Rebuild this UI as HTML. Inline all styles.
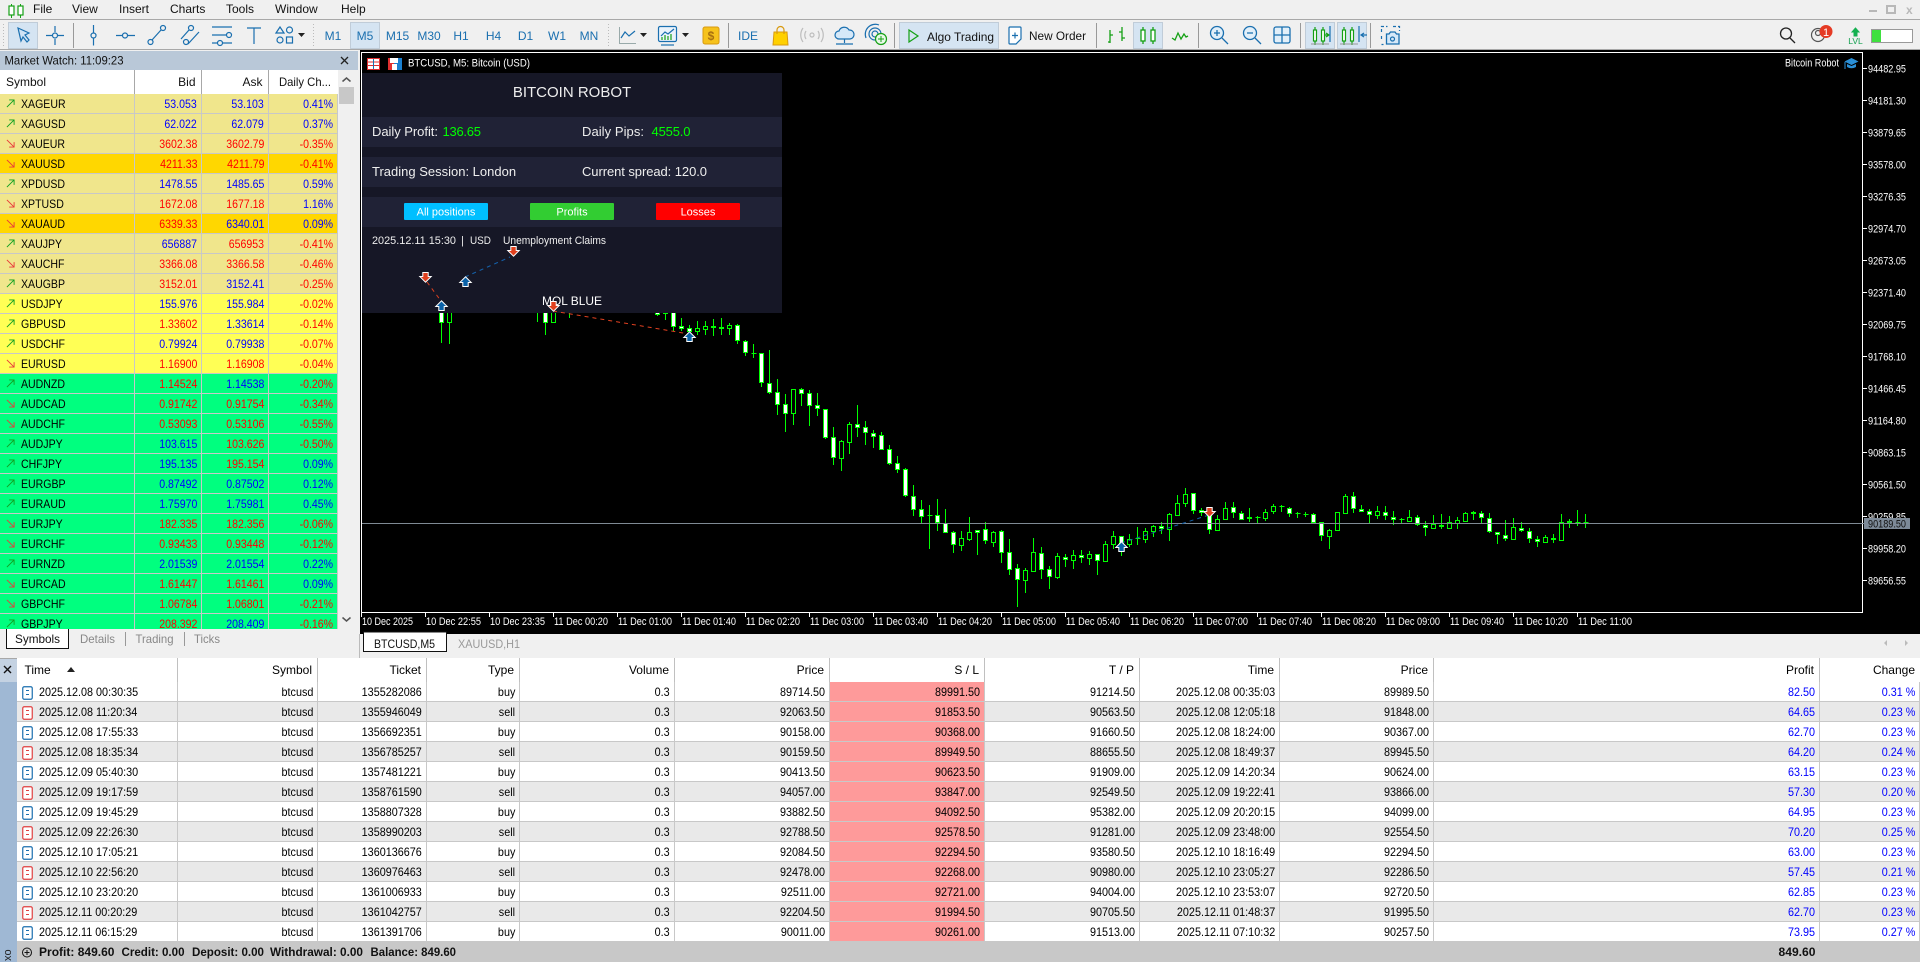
<!DOCTYPE html>
<html><head><meta charset="utf-8"><title>MetaTrader</title>
<style>
html,body{margin:0;padding:0;width:1920px;height:962px;overflow:hidden;background:#f0f0f0;font-family:"Liberation Sans",sans-serif;font-size:12px;color:#000}
svg.m{position:absolute;left:0;top:0}
svg.m text{font-family:"Liberation Sans",sans-serif}
table{border-collapse:separate;border-spacing:0;table-layout:fixed;position:absolute}
td,th{height:20px;box-sizing:border-box;padding:0 4px 0 0;text-align:right;white-space:nowrap;border-right:1px solid #c8c8c8;border-bottom:1px solid #c8c8c8;font-weight:normal;overflow:hidden;line-height:18px}
i{font-style:normal;display:inline-block;transform-origin:100% 50%}
#w{position:absolute;left:0;top:94px;width:338px;height:535px;overflow:hidden;background:#00ff7f}
#w table{left:0;top:0;width:338px}
#w i{transform:scaleX(.88)}
#w .s{text-align:left;padding-left:21px;position:relative}
#w .s i{transform-origin:0 50%}
#w .s svg{position:absolute;left:6px;top:5px}
.k td{background:#f0e68c}.g td{background:#ffd700}.y td{background:#ffff55}.v td{background:#00ff7f}
.b{color:#00f}.r{color:#f00}
#t{left:17px;top:658px;width:1903px;background:#fff}
#t th{height:24px;border-bottom:0;border-right:1px solid #c0c0c0;background:#fff;padding-right:5px}
#t i{transform:scaleX(.9)}
#t .l{text-align:left;padding-left:22px;position:relative}
#t .l i{transform-origin:0 50%}
#t .l svg{position:absolute;left:5px;top:4px}
#t tr.e td{background:#e9e9e9}
#t td.p,#t tr.e td.p{background:#fe9a9a}
#t td.c{color:#00f}
</style></head><body>
<svg class="m" width="1920" height="962" viewBox="0 0 1920 962" font-size="12">
<defs>
<symbol id="u" viewBox="0 0 10 10"><path d="M1 9L9 1M3.500 1H9V6.500" fill="none" stroke="#12a020" stroke-width="1"/></symbol>
<symbol id="d" viewBox="0 0 10 10"><path d="M1 1L9 9M3.500 9H9V3.500" fill="none" stroke="#e8383a" stroke-width="1"/></symbol>
<symbol id="tb" viewBox="0 0 11 14"><rect x=".75" y=".75" width="9.5" height="12.5" rx="1.5" fill="#fff" stroke="#1a6faf" stroke-width="1.2"/><path d="M4 4.5h3M4 8.5h3" stroke="#1a6faf"/></symbol>
<symbol id="ts" viewBox="0 0 11 14"><rect x=".75" y=".75" width="9.5" height="12.5" rx="1.5" fill="#fff" stroke="#e04040" stroke-width="1.2"/><path d="M4 4.5h3M4 8.5h3" stroke="#e04040"/></symbol>
<g id="au"><path d="M0 -4.500L4.500 0H2.200V4H-2.200V0H-4.500Z" fill="#0b62a8" stroke="#fff" stroke-width="2" paint-order="stroke"/></g>
<g id="ad"><path d="M0 4.500L4.500 0H2.200V-4H-2.200V0H-4.500Z" fill="#e0401e" stroke="#fff" stroke-width="2" paint-order="stroke"/></g>
</defs>
<rect width="1920" height="962" fill="#f0f0f0"/>
<!-- menu -->
<path d="M11.500 4v14M20.500 4v14" stroke="#14a014"/><rect x="9" y="6" width="5" height="9" fill="#fff" stroke="#14a014" stroke-width="1.200"/><rect x="18" y="6" width="5" height="9" fill="#fff" stroke="#14a014" stroke-width="1.200"/>
<g fill="#111"><text x="33" y="13">File</text><text x="72" y="13">View</text><text x="119" y="13">Insert</text><text x="170" y="13">Charts</text><text x="226" y="13">Tools</text><text x="275" y="13">Window</text><text x="341" y="13">Help</text></g>
<rect x="0" y="19" width="1920" height="1" fill="#a8a8a8"/>
<g fill="#b8b8b8"><rect x="1869" y="10" width="8" height="2"/><rect x="1887" y="6" width="8" height="7" fill="none" stroke="#b8b8b8" stroke-width="2"/><text x="1906" y="14" font-size="12" font-weight="bold">x</text></g>
<!-- grips -->
<path d="M3.500 24v22M313.500 24v22M608.500 24v22" stroke="#bbb" stroke-dasharray="1 2"/>
<!-- pressed -->
<g fill="#d5e4f2" stroke="#c0ccd8"><rect x="8.500" y="22.500" width="29" height="26"/><rect x="350.500" y="22.500" width="29" height="26"/><rect x="899.500" y="22.500" width="99" height="26"/><rect x="1133.500" y="22.500" width="29" height="26"/><rect x="1305.500" y="22.500" width="29" height="26"/><rect x="1337.500" y="22.500" width="29" height="26"/></g>
<!-- seps -->
<path d="M73.500 23v25M728.500 23v25M894.500 23v25M1096.500 23v25M1198.500 23v25M1300.500 23v25M1370.500 23v25" stroke="#999"/>
<!-- drawing tools -->
<g fill="none" stroke="#1a6faf" stroke-width="1.200">
<path d="M18 28l11 5-4 2 4 5-2 2-4-5-2 4z" fill="#cfe3f5"/>
<path d="M46 35.500h6M58 35.500h6M55 26v6M55 39v6"/><circle cx="55" cy="35.500" r="2.500"/>
<path d="M93.500 25v7.500M93.500 38.500v7"/><circle cx="93.500" cy="35.500" r="2.500"/>
<path d="M116 35.500h6.500M128 35.500h7"/><circle cx="125" cy="35.500" r="2.500"/>
<path d="M152 40l9-10"/><circle cx="150.500" cy="42" r="2.500"/><circle cx="163" cy="28" r="2.500"/>
<path d="M181 39l8-9M188 44l11-12"/><circle cx="191" cy="28" r="2.500"/><circle cx="186" cy="42" r="2.500"/>
<path d="M212 27h20M212 35h14M212 43h6M222 43h10"/><circle cx="229" cy="35" r="2.500"/><circle cx="220" cy="43" r="2.500"/>
<path d="M247 28h14M254 28v16"/>
<path d="M276 33l4-6 4 6z"/><circle cx="289.500" cy="30" r="3"/><circle cx="280" cy="40" r="3"/><rect x="286.500" y="37" width="6" height="6"/>
</g>
<path d="M298 33h7l-3.500 4z" fill="#222"/>
<g fill="#1a6faf" text-anchor="middle"><text x="333" y="40">M1</text><text x="365" y="40">M5</text><text x="397.500" y="40">M15</text><text x="429" y="40">M30</text><text x="461" y="40">H1</text><text x="493.500" y="40">H4</text><text x="525.500" y="40">D1</text><text x="557" y="40">W1</text><text x="589" y="40">MN</text></g>
<!-- chart-type -->
<path d="M619.500 27v16.500H636" fill="none" stroke="#9aa"/><path d="M621 38l4-6 4 4 6-5" fill="none" stroke="#1a6faf" stroke-width="1.200"/>
<path d="M640 33h7l-3.500 4z" fill="#222"/>
<g fill="none" stroke="#1a6faf" stroke-width="1.200"><rect x="658.500" y="26.500" width="18" height="15" rx="1.500" fill="#eaf3fb"/><path d="M661 45h13"/><path d="M661 36l4-4 3 2 6-5"/></g><path d="M662 37v3M665 35v5M668 36v4M671 34v6" stroke="#14a014" stroke-width="1.200"/>
<path d="M682 33h7l-3.500 4z" fill="#222"/>
<rect x="703" y="27" width="16" height="17" rx="2" fill="#f6c21c" stroke="#d89a10"/><text x="711" y="40" text-anchor="middle" font-size="12" font-weight="bold" fill="#a87010">$</text>
<text x="748" y="40" text-anchor="middle" fill="#1a6faf">IDE</text>
<path d="M774 32h13l1 13h-15z" fill="#ffd000" stroke="#d89a10"/><path d="M777 34v-4a3.500 3.500 0 0 1 7 0v4" fill="none" stroke="#d89a10" stroke-width="1.200"/>
<g fill="none" stroke="#bdbdbd" stroke-width="1.200"><circle cx="812" cy="35" r="2"/><path d="M806 31a7 7 0 0 0 0 8M818 31a7 7 0 0 1 0 8M803 28a12 12 0 0 0 0 14M821 28a12 12 0 0 1 0 14"/></g>
<g fill="none" stroke="#1a6faf" stroke-width="1.200"><path d="M839 39a4 4 0 0 1 0-8 5.500 5.500 0 0 1 10-1 4.500 4.500 0 0 1 1 9z" fill="#d5e8f8"/><path d="M844.500 39v4M836 44h17"/>
<circle cx="875" cy="34" r="3"/><circle cx="875" cy="34" r="6"/><path d="M866 38a10 10 0 0 1 13-13"/></g>
<circle cx="881" cy="39" r="5.500" fill="#e8f8e8" stroke="#14a014" stroke-width="1.200"/><path d="M878 39h6M881 36v6" stroke="#14a014"/>
<path d="M909 30l9 6-9 6z" fill="none" stroke="#14a014" stroke-width="1.200"/>
<text x="927" y="41" font-size="12" fill="#111" textLength="67" lengthAdjust="spacingAndGlyphs">Algo Trading</text>
<g fill="none" stroke="#1a6faf" stroke-width="1.200"><path d="M1010 27h10a1 1 0 0 1 1 1v11l-5 5h-6a1 1 0 0 1-1-1V28a1 1 0 0 1 1-1z" fill="#fff"/><path d="M1012 35.500h6M1015 32.500v6"/></g>
<text x="1029" y="40" fill="#111" textLength="57" lengthAdjust="spacingAndGlyphs">New Order</text>
<g fill="none" stroke="#14a014" stroke-width="1.300"><path d="M1110 30v13M1110 42h-2M1110 35h3M1122 27v14M1122 32h-3M1122 38h3"/>
<path d="M1143 27v17M1153 27v17"/><rect x="1141" y="30" width="4" height="11" fill="#fff"/><rect x="1151" y="30" width="4" height="11" fill="#fff"/>
<path d="M1172 38l3 2 3-7 3 6 3-5 2 3 2-1"/></g>
<g fill="none" stroke="#1a6faf" stroke-width="1.300"><circle cx="1217" cy="33" r="6.500" fill="#e2eff9"/><path d="M1222 38l6 6M1214 33h6M1217 30v6"/><circle cx="1250" cy="33" r="6.500" fill="#e2eff9"/><path d="M1255 38l6 6M1247 33h6"/>
<rect x="1274" y="27" width="16" height="16" rx="2" fill="#e2eff9"/><path d="M1282 27v16M1274 35h16"/></g>
<g fill="none" stroke="#14a014" stroke-width="1.200"><path d="M1315 27v18M1323 27v18"/><rect x="1313.500" y="30" width="3" height="11" fill="#fff"/><rect x="1321.500" y="30" width="3" height="11" fill="#fff"/><path d="M1325 35h3M1326 33l3 2-3 2" /><path d="M1344 27v18M1352 27v18"/><rect x="1342.500" y="30" width="3" height="11" fill="#fff"/><rect x="1350.500" y="30" width="3" height="11" fill="#fff"/></g>
<path d="M1330 26v16M1359 26v16M1361 35h6M1364 33l-3 2 3 2" fill="none" stroke="#1a6faf" stroke-width="1.200"/>
<path d="M1311 44h18M1340 44h18" stroke="#999"/>
<g fill="none" stroke="#1a6faf" stroke-width="1.200"><path d="M1381.500 32v-5.500h6M1393 26.500h6.500V31M1381.500 36v5M1381.500 44.500h2" stroke-dasharray="3 2"/><path d="M1386.500 34h2.500l1.500-2h4.500l1.500 2h2.500v10h-12.500z" fill="#d5e8f8" stroke-width="1.300"/><circle cx="1392.500" cy="39" r="2"/></g>
<g fill="none" stroke="#222" stroke-width="1.300"><circle cx="1786" cy="33.500" r="5.500"/><path d="M1790 38l5 5"/></g>
<g fill="none" stroke="#555" stroke-width="1.200"><circle cx="1818" cy="35" r="6.500"/><circle cx="1818" cy="33" r="2.500"/></g>
<circle cx="1826" cy="31.500" r="6.500" fill="#e53a24"/><text x="1826" y="36" text-anchor="middle" font-size="11" fill="#fff">1</text>
<path d="M1855.500 28l-3.500 4h2v4h3v-4h2z" fill="#14b050" stroke="#14b050"/><text x="1855.500" y="44" text-anchor="middle" font-size="8.500" fill="#14a050">LVL</text>
<rect x="1871.500" y="29.500" width="41" height="13" fill="#fff" stroke="#999"/><rect x="1872" y="30" width="9" height="12" fill="#3fe03f"/>
<rect x="0" y="49" width="1920" height="1" fill="#a8a8a8"/>
<!-- market watch head -->
<rect x="0" y="51" width="358" height="19" fill="#b9c8d8"/>
<text x="4.500" y="64.500" fill="#111" textLength="119" lengthAdjust="spacingAndGlyphs">Market Watch: 11:09:23</text>
<path d="M341 57l7 7M348 57l-7 7" stroke="#222" stroke-width="1.300"/>
<rect x="0" y="70" width="338" height="24" fill="#fff"/>
<path d="M134.500 70v24M201.500 70v24M268.500 70v24" stroke="#a8a8a8"/>
<g fill="#111"><text x="6" y="86">Symbol</text><text x="195.500" y="86" text-anchor="end">Bid</text><text x="262.500" y="86" text-anchor="end">Ask</text><text x="331" y="86" text-anchor="end" textLength="52" lengthAdjust="spacingAndGlyphs">Daily Ch...</text></g>
<rect x="339" y="87" width="15" height="17" fill="#c8c8c8"/>
<path d="M342.500 81.500l4-3.500 4 3.500M342.500 617.500l4 3.500 4-3.500" fill="none" stroke="#555" stroke-width="1.500"/>
<!-- MW tabs -->
<rect x="6.500" y="628" width="62" height="20.500" fill="#fff" stroke="#111"/>
<text x="15" y="643" fill="#111" textLength="45" lengthAdjust="spacingAndGlyphs">Symbols</text>
<g fill="#888"><text x="80" y="643" textLength="35" lengthAdjust="spacingAndGlyphs">Details</text><text x="135.500" y="643" textLength="38" lengthAdjust="spacingAndGlyphs">Trading</text><text x="194" y="643" textLength="26" lengthAdjust="spacingAndGlyphs">Ticks</text></g>
<path d="M125.500 632v14M184.500 632v14" stroke="#999"/>
<!-- chart -->
<rect x="360" y="50" width="1560" height="584" fill="#000"/>
<path d="M362 52.500H1862.500V612.500H362M361.500 52V613" fill="none" stroke="#fff"/>
<g stroke="#fff"><path d="M361.500 612v5M425.500 612v5M489.500 612v5M553.500 612v5M617.500 612v5M681.500 612v5M745.500 612v5M809.500 612v5M873.500 612v5M937.500 612v5M1001.500 612v5M1065.500 612v5M1129.500 612v5M1193.500 612v5M1257.500 612v5M1321.500 612v5M1385.500 612v5M1449.500 612v5M1513.500 612v5M1577.500 612v5"/>
<path d="M1863 68.500h4M1863 100.500h4M1863 132.500h4M1863 164.500h4M1863 196.500h4M1863 228.500h4M1863 260.500h4M1863 292.500h4M1863 324.500h4M1863 356.500h4M1863 388.500h4M1863 420.500h4M1863 452.500h4M1863 484.500h4M1863 516.500h4M1863 548.500h4M1863 580.500h4"/></g>
<g fill="#fff" font-size="11">
<text x="362" y="625" textLength="51" lengthAdjust="spacingAndGlyphs">10 Dec 2025</text>
<text x="426" y="625" textLength="55" lengthAdjust="spacingAndGlyphs">10 Dec 22:55</text><text x="490" y="625" textLength="55" lengthAdjust="spacingAndGlyphs">10 Dec 23:35</text><text x="554" y="625" textLength="54" lengthAdjust="spacingAndGlyphs">11 Dec 00:20</text><text x="618" y="625" textLength="54" lengthAdjust="spacingAndGlyphs">11 Dec 01:00</text><text x="682" y="625" textLength="54" lengthAdjust="spacingAndGlyphs">11 Dec 01:40</text><text x="746" y="625" textLength="54" lengthAdjust="spacingAndGlyphs">11 Dec 02:20</text><text x="810" y="625" textLength="54" lengthAdjust="spacingAndGlyphs">11 Dec 03:00</text><text x="874" y="625" textLength="54" lengthAdjust="spacingAndGlyphs">11 Dec 03:40</text><text x="938" y="625" textLength="54" lengthAdjust="spacingAndGlyphs">11 Dec 04:20</text><text x="1002" y="625" textLength="54" lengthAdjust="spacingAndGlyphs">11 Dec 05:00</text><text x="1066" y="625" textLength="54" lengthAdjust="spacingAndGlyphs">11 Dec 05:40</text><text x="1130" y="625" textLength="54" lengthAdjust="spacingAndGlyphs">11 Dec 06:20</text><text x="1194" y="625" textLength="54" lengthAdjust="spacingAndGlyphs">11 Dec 07:00</text><text x="1258" y="625" textLength="54" lengthAdjust="spacingAndGlyphs">11 Dec 07:40</text><text x="1322" y="625" textLength="54" lengthAdjust="spacingAndGlyphs">11 Dec 08:20</text><text x="1386" y="625" textLength="54" lengthAdjust="spacingAndGlyphs">11 Dec 09:00</text><text x="1450" y="625" textLength="54" lengthAdjust="spacingAndGlyphs">11 Dec 09:40</text><text x="1514" y="625" textLength="54" lengthAdjust="spacingAndGlyphs">11 Dec 10:20</text><text x="1578" y="625" textLength="54" lengthAdjust="spacingAndGlyphs">11 Dec 11:00</text>
<text x="1868" y="72.500" textLength="38" lengthAdjust="spacingAndGlyphs">94482.95</text><text x="1868" y="104.500" textLength="38" lengthAdjust="spacingAndGlyphs">94181.30</text><text x="1868" y="136.500" textLength="38" lengthAdjust="spacingAndGlyphs">93879.65</text><text x="1868" y="168.500" textLength="38" lengthAdjust="spacingAndGlyphs">93578.00</text><text x="1868" y="200.500" textLength="38" lengthAdjust="spacingAndGlyphs">93276.35</text><text x="1868" y="232.500" textLength="38" lengthAdjust="spacingAndGlyphs">92974.70</text><text x="1868" y="264.500" textLength="38" lengthAdjust="spacingAndGlyphs">92673.05</text><text x="1868" y="296.500" textLength="38" lengthAdjust="spacingAndGlyphs">92371.40</text><text x="1868" y="328.500" textLength="38" lengthAdjust="spacingAndGlyphs">92069.75</text><text x="1868" y="360.500" textLength="38" lengthAdjust="spacingAndGlyphs">91768.10</text><text x="1868" y="392.500" textLength="38" lengthAdjust="spacingAndGlyphs">91466.45</text><text x="1868" y="424.500" textLength="38" lengthAdjust="spacingAndGlyphs">91164.80</text><text x="1868" y="456.500" textLength="38" lengthAdjust="spacingAndGlyphs">90863.15</text><text x="1868" y="488.500" textLength="38" lengthAdjust="spacingAndGlyphs">90561.50</text><text x="1868" y="520.500" textLength="38" lengthAdjust="spacingAndGlyphs">90259.85</text><text x="1868" y="552.500" textLength="38" lengthAdjust="spacingAndGlyphs">89958.20</text><text x="1868" y="584.500" textLength="38" lengthAdjust="spacingAndGlyphs">89656.55</text>
</g>
<!-- candles -->
<path stroke="#0f0" fill="none" d="M441.500 312V343M449.500 312V344M537.500 312V322M545.500 312V335M569.500 312V318M657.500 312V316M665.500 312V320M673.500 312V331M681.500 318V331M689.500 325V333M697.500 321V335M705.500 321V335M713.500 319V336M721.500 318V335M729.500 323V335M737.500 324V344M745.500 340V356M753.500 344V358M761.500 353V387M769.500 350V394M777.500 379V415M785.500 394V432M793.500 414V425M801.500 388V406M809.500 390V426M817.500 393V416M825.500 409V439M833.500 427V465M841.500 440V471M849.500 422V454M857.500 405V437M865.500 421V445M873.500 430V448M881.500 432V450M889.500 445V465M897.500 456V473M905.500 468V497M913.500 485V516M921.500 500V523M929.500 505V549M937.500 499V531M945.500 509V533M953.500 531V553M961.500 531V551M969.500 517V541M977.500 530V555M985.500 522V544M993.500 531V547M1001.500 530V563M1009.500 539V575M1017.500 564V607M1025.500 568V593M1033.500 538V571M1041.500 547V579M1049.500 566V589M1057.500 553V579M1065.500 554V567M1073.500 550V569M1081.500 550V563M1089.500 551V565M1097.500 554V575M1105.500 541V562M1113.500 531V549M1121.500 536V556M1129.500 534V547M1137.500 527V545M1145.500 528V543M1153.500 525V537M1161.500 522V534M1169.500 513V541M1177.500 495V515M1185.500 488V507M1193.500 493V514M1201.500 508V516M1209.500 512V534M1217.500 515V531M1225.500 502V519M1233.500 502V518M1241.500 511V520M1249.500 508V522M1257.500 516V523M1265.500 509V521M1273.500 504V514M1281.500 505V512M1289.500 507V517M1297.500 512V518M1305.500 512V517M1313.500 513V523M1321.500 522V541M1329.500 529V549M1345.500 494V513M1353.500 492V513M1361.500 505V512M1369.500 509V523M1377.500 506V519M1385.500 506V520M1393.500 511V525M1401.500 518V523M1409.500 510V521M1417.500 515V526M1425.500 521V536M1433.500 515V528M1441.500 514V529M1449.500 516V529M1457.500 517V529M1465.500 512V522M1473.500 511V520M1481.500 511V523M1489.500 513V533M1497.500 532V544M1505.500 520V541M1513.500 518V539M1521.500 522V532M1529.500 528V543M1537.500 536V547M1545.500 535V542M1553.500 534V543M1561.500 514V540M1569.500 519V528M1577.500 510V526M1585.500 514V528M751.500 353.500h5M927.500 515.500h5M1255.500 517.500h5M1279.500 506.500h5M1295.500 513.500h5M1303.500 514.500h5M1399.500 519.500h5M1575.500 522.500h5M1583.500 522.500h5M1135.500 538.500h5"/>
<path stroke="#0f0" fill="#fff" d="M439.500 312.500h4v10h-4zM543.500 312.500h4v10h-4zM655.500 312.500h4v2h-4zM663.500 312.500h4v1h-4zM671.500 312.500h4v14h-4zM679.500 326.500h4v2h-4zM687.500 328.500h4v3h-4zM711.500 326.500h4v1h-4zM719.500 327.500h4v1h-4zM735.500 325.500h4v15h-4zM743.500 341.500h4v11h-4zM759.500 353.500h4v29h-4zM767.500 383.500h4v9h-4zM775.500 392.500h4v12h-4zM783.500 404.500h4v9h-4zM799.500 389.500h4v4h-4zM807.500 393.500h4v12h-4zM815.500 405.500h4v3h-4zM823.500 409.500h4v28h-4zM831.500 437.500h4v20h-4zM855.500 424.500h4v3h-4zM863.500 427.500h4v5h-4zM871.500 433.500h4v3h-4zM879.500 435.500h4v14h-4zM887.500 449.500h4v14h-4zM895.500 463.500h4v6h-4zM903.500 469.500h4v26h-4zM911.500 496.500h4v13h-4zM919.500 509.500h4v7h-4zM935.500 515.500h4v7h-4zM943.500 523.500h4v9h-4zM951.500 532.500h4v12h-4zM975.500 530.500h4v2h-4zM983.500 529.500h4v11h-4zM999.500 531.500h4v21h-4zM1007.500 552.500h4v17h-4zM1015.500 568.500h4v11h-4zM1039.500 553.500h4v16h-4zM1047.500 569.500h4v7h-4zM1063.500 557.500h4v2h-4zM1079.500 555.500h4v2h-4zM1095.500 554.500h4v6h-4zM1119.500 536.500h4v7h-4zM1159.500 526.500h4v2h-4zM1191.500 493.500h4v17h-4zM1199.500 510.500h4v2h-4zM1207.500 512.500h4v17h-4zM1231.500 507.500h4v5h-4zM1239.500 513.500h4v6h-4zM1247.500 517.500h4v1h-4zM1287.500 508.500h4v5h-4zM1311.500 514.500h4v8h-4zM1319.500 522.500h4v13h-4zM1351.500 496.500h4v12h-4zM1359.500 509.500h4v2h-4zM1367.500 511.500h4v3h-4zM1383.500 512.500h4v3h-4zM1391.500 517.500h4v2h-4zM1415.500 517.500h4v7h-4zM1423.500 525.500h4v2h-4zM1439.500 525.500h4v1h-4zM1471.500 512.500h4v1h-4zM1479.500 513.500h4v4h-4zM1487.500 518.500h4v13h-4zM1495.500 532.500h4v2h-4zM1503.500 535.500h4v3h-4zM1519.500 528.500h4v2h-4zM1527.500 531.500h4v7h-4zM1535.500 539.500h4v2h-4zM1551.500 538.500h4v1h-4zM1567.500 521.500h4v1h-4z"/>
<path stroke="#0f0" fill="#000" d="M447.500 312.500h4v10h-4zM551.500 312.500h4v10h-4zM695.500 328.500h4v3h-4zM703.500 326.500h4v3h-4zM727.500 325.500h4v3h-4zM791.500 389.500h4v24h-4zM839.500 441.500h4v17h-4zM847.500 424.500h4v18h-4zM959.500 538.500h4v7h-4zM967.500 532.500h4v7h-4zM991.500 532.500h4v10h-4zM1023.500 570.500h4v10h-4zM1031.500 552.500h4v19h-4zM1055.500 556.500h4v21h-4zM1071.500 555.500h4v5h-4zM1087.500 554.500h4v4h-4zM1103.500 544.500h4v17h-4zM1111.500 536.500h4v8h-4zM1127.500 539.500h4v5h-4zM1143.500 531.500h4v8h-4zM1151.500 526.500h4v5h-4zM1167.500 514.500h4v15h-4zM1175.500 503.500h4v12h-4zM1183.500 494.500h4v9h-4zM1215.500 519.500h4v11h-4zM1223.500 508.500h4v11h-4zM1263.500 512.500h4v6h-4zM1271.500 506.500h4v5h-4zM1327.500 530.500h4v6h-4zM1335.500 512.500h4v18h-4zM1343.500 496.500h4v17h-4zM1375.500 511.500h4v4h-4zM1407.500 517.500h4v4h-4zM1431.500 524.500h4v4h-4zM1447.500 522.500h4v6h-4zM1455.500 520.500h4v3h-4zM1463.500 513.500h4v8h-4zM1511.500 527.500h4v12h-4zM1543.500 537.500h4v5h-4zM1559.500 522.500h4v18h-4z"/>
<!-- price line -->
<path d="M362 523.500H1864" stroke="#7f8a94"/>
<rect x="1864" y="518" width="46" height="11" fill="#7d8a98"/>
<text x="1868" y="527.500" font-size="11" fill="#111" textLength="38" lengthAdjust="spacingAndGlyphs">90189.50</text>
<!-- chart title -->
<g><rect x="367.500" y="58.500" width="12" height="11" fill="#fff" stroke="#e03030"/><path d="M368 62h11M368 65.500h11" stroke="#e03030"/><path d="M373.500 59v10" stroke="#1a6faf"/><rect x="388" y="58" width="6" height="12" fill="#e03030"/><rect x="394" y="58" width="8" height="12" fill="#1a80d0"/><rect x="390" y="58" width="8" height="5" fill="#fff"/><rect x="392" y="64" width="5" height="6" fill="#fff"/></g>
<text x="408" y="66.500" font-size="11" fill="#fff" textLength="122" lengthAdjust="spacingAndGlyphs">BTCUSD, M5:  Bitcoin (USD)</text>
<text x="1785" y="66.500" font-size="11" fill="#fff" textLength="54" lengthAdjust="spacingAndGlyphs">Bitcoin Robot</text>
<path d="M1851.500 58l7 3.500-7 3.500-7-3.500z" fill="#2a90d8"/><path d="M1847 64v3q4.500 2.500 9 0v-3l-4.500 2z" fill="#2a90d8"/><path d="M1845 62v7" stroke="#2a90d8"/>
<!-- panel -->
<rect x="362" y="73" width="420" height="240" fill="#161726"/>
<rect x="362" y="117" width="420" height="30" fill="#202236"/><rect x="362" y="157" width="420" height="30" fill="#202236"/><rect x="362" y="197" width="420" height="30" fill="#202236"/>
<g fill="#eee">
<text x="572" y="97" font-size="15" text-anchor="middle">BITCOIN ROBOT</text>
<text x="372" y="136" font-size="13" textLength="66">Daily Profit:</text><text x="442.500" y="136" font-size="13" fill="#0f0" textLength="38.500">136.65</text>
<text x="582" y="136" font-size="13" textLength="62">Daily Pips:</text><text x="651.500" y="136" font-size="13" fill="#0f0" textLength="39">4555.0</text>
<text x="372" y="176" font-size="13">Trading Session: London</text>
<text x="582" y="176" font-size="13" textLength="125">Current spread: 120.0</text>
<text x="372" y="244" font-size="11" textLength="84" lengthAdjust="spacingAndGlyphs">2025.12.11 15:30</text><text x="461" y="244" font-size="11">|</text><text x="470" y="244" font-size="11" textLength="21" lengthAdjust="spacingAndGlyphs">USD</text>
<text x="503" y="244" font-size="11" textLength="103" lengthAdjust="spacingAndGlyphs">Unemployment Claims</text>
<text x="572" y="305" font-size="12" text-anchor="middle" fill="#fff" textLength="60" lengthAdjust="spacingAndGlyphs">MOL BLUE</text>
</g>
<rect x="404" y="203" width="84" height="17" rx="1" fill="#00bfff"/><rect x="530" y="203" width="84" height="17" rx="1" fill="#32cd32"/><rect x="656" y="203" width="84" height="17" rx="1" fill="#f00"/>
<g fill="#fff" font-size="11" text-anchor="middle"><text x="446" y="215.500">All positions</text><text x="572" y="215.500">Profits</text><text x="698" y="215.500">Losses</text></g>
<!-- trades -->
<g fill="none" stroke-dasharray="4 4"><path d="M465 277L510 257" stroke="#1560a8"/><path d="M427 282L441 301" stroke="#d84020"/><path d="M553 311L689 334" stroke="#e04020"/><path d="M1121 543L1209 515" stroke="#1560a8"/></g>
<use href="#ad" x="513.500" y="251"/><use href="#au" x="465.500" y="282"/><use href="#ad" x="425.500" y="277"/><use href="#au" x="441.500" y="306"/><use href="#ad" x="553.500" y="306"/><use href="#au" x="689.500" y="337"/><use href="#au" x="1121.500" y="547"/><use href="#ad" x="1209.500" y="512"/>
<!-- chart tabs -->
<path d="M359.500 634v24" stroke="#bbb"/>
<rect x="363.500" y="632" width="83" height="19.500" fill="#fff" stroke="#111"/>
<text x="374" y="648" fill="#111" textLength="61" lengthAdjust="spacingAndGlyphs">BTCUSD,M5</text>
<text x="458" y="648" fill="#999" textLength="62" lengthAdjust="spacingAndGlyphs">XAUUSD,H1</text>
<path d="M1887 640v6l-3-3zM1905 640v6l3-3z" fill="#bbb"/>
<rect x="0" y="658" width="1920" height="1" fill="#a8a8a8"/>
<!-- toolbox strip -->
<rect x="0" y="659" width="17" height="303" fill="#9fb8d4"/><rect x="0" y="659" width="17" height="23" fill="#c4d2e2"/>
<path d="M4 666l7 7M11 666l-7 7" stroke="#111" stroke-width="1.400"/>
<text transform="translate(5 961) rotate(90)" text-anchor="end" font-size="11" fill="#222">ox</text>
<!-- footer -->
<rect x="17" y="942" width="1903" height="20" fill="#c8c8c8"/>
<circle cx="27" cy="952.500" r="4.500" fill="none" stroke="#111"/><path d="M24.500 952.500h5M27 950v5" stroke="#111"/>
<g font-weight="bold" fill="#111"><text x="39" y="956" textLength="75.500" lengthAdjust="spacingAndGlyphs">Profit: 849.60</text><text x="121.500" y="956" textLength="63" lengthAdjust="spacingAndGlyphs">Credit: 0.00</text><text x="192" y="956" textLength="72" lengthAdjust="spacingAndGlyphs">Deposit: 0.00</text><text x="270" y="956" textLength="93" lengthAdjust="spacingAndGlyphs">Withdrawal: 0.00</text><text x="370.500" y="956" textLength="85.500" lengthAdjust="spacingAndGlyphs">Balance: 849.60</text><text x="1778.500" y="956" textLength="37" lengthAdjust="spacingAndGlyphs">849.60</text></g>
</svg>

<div id="w"><table><colgroup><col style="width:135px"><col style="width:67px"><col style="width:67px"><col style="width:69px"></colgroup>
<tr class="k"><td class="s"><svg width="9" height="9"><use href="#u"/></svg><i>XAGEUR</i><td class="b"><i>53.053</i><td class="b"><i>53.103</i><td class="b"><i>0.41%</i>
<tr class="k"><td class="s"><svg width="9" height="9"><use href="#u"/></svg><i>XAGUSD</i><td class="b"><i>62.022</i><td class="b"><i>62.079</i><td class="b"><i>0.37%</i>
<tr class="k"><td class="s"><svg width="9" height="9"><use href="#d"/></svg><i>XAUEUR</i><td class="r"><i>3602.38</i><td class="r"><i>3602.79</i><td class="r"><i>-0.35%</i>
<tr class="g"><td class="s"><svg width="9" height="9"><use href="#d"/></svg><i>XAUUSD</i><td class="r"><i>4211.33</i><td class="r"><i>4211.79</i><td class="r"><i>-0.41%</i>
<tr class="k"><td class="s"><svg width="9" height="9"><use href="#u"/></svg><i>XPDUSD</i><td class="b"><i>1478.55</i><td class="b"><i>1485.65</i><td class="b"><i>0.59%</i>
<tr class="k"><td class="s"><svg width="9" height="9"><use href="#d"/></svg><i>XPTUSD</i><td class="r"><i>1672.08</i><td class="r"><i>1677.18</i><td class="b"><i>1.16%</i>
<tr class="g"><td class="s"><svg width="9" height="9"><use href="#d"/></svg><i>XAUAUD</i><td class="r"><i>6339.33</i><td class="b"><i>6340.01</i><td class="b"><i>0.09%</i>
<tr class="k"><td class="s"><svg width="9" height="9"><use href="#u"/></svg><i>XAUJPY</i><td class="b"><i>656887</i><td class="r"><i>656953</i><td class="r"><i>-0.41%</i>
<tr class="k"><td class="s"><svg width="9" height="9"><use href="#d"/></svg><i>XAUCHF</i><td class="r"><i>3366.08</i><td class="r"><i>3366.58</i><td class="r"><i>-0.46%</i>
<tr class="k"><td class="s"><svg width="9" height="9"><use href="#u"/></svg><i>XAUGBP</i><td class="r"><i>3152.01</i><td class="b"><i>3152.41</i><td class="r"><i>-0.25%</i>
<tr class="y"><td class="s"><svg width="9" height="9"><use href="#u"/></svg><i>USDJPY</i><td class="b"><i>155.976</i><td class="b"><i>155.984</i><td class="r"><i>-0.02%</i>
<tr class="y"><td class="s"><svg width="9" height="9"><use href="#u"/></svg><i>GBPUSD</i><td class="r"><i>1.33602</i><td class="b"><i>1.33614</i><td class="r"><i>-0.14%</i>
<tr class="y"><td class="s"><svg width="9" height="9"><use href="#u"/></svg><i>USDCHF</i><td class="b"><i>0.79924</i><td class="b"><i>0.79938</i><td class="r"><i>-0.07%</i>
<tr class="y"><td class="s"><svg width="9" height="9"><use href="#d"/></svg><i>EURUSD</i><td class="r"><i>1.16900</i><td class="r"><i>1.16908</i><td class="r"><i>-0.04%</i>
<tr class="v"><td class="s"><svg width="9" height="9"><use href="#u"/></svg><i>AUDNZD</i><td class="r"><i>1.14524</i><td class="b"><i>1.14538</i><td class="r"><i>-0.20%</i>
<tr class="v"><td class="s"><svg width="9" height="9"><use href="#d"/></svg><i>AUDCAD</i><td class="r"><i>0.91742</i><td class="r"><i>0.91754</i><td class="r"><i>-0.34%</i>
<tr class="v"><td class="s"><svg width="9" height="9"><use href="#d"/></svg><i>AUDCHF</i><td class="r"><i>0.53093</i><td class="r"><i>0.53106</i><td class="r"><i>-0.55%</i>
<tr class="v"><td class="s"><svg width="9" height="9"><use href="#u"/></svg><i>AUDJPY</i><td class="b"><i>103.615</i><td class="r"><i>103.626</i><td class="r"><i>-0.50%</i>
<tr class="v"><td class="s"><svg width="9" height="9"><use href="#u"/></svg><i>CHFJPY</i><td class="b"><i>195.135</i><td class="r"><i>195.154</i><td class="b"><i>0.09%</i>
<tr class="v"><td class="s"><svg width="9" height="9"><use href="#u"/></svg><i>EURGBP</i><td class="b"><i>0.87492</i><td class="b"><i>0.87502</i><td class="b"><i>0.12%</i>
<tr class="v"><td class="s"><svg width="9" height="9"><use href="#u"/></svg><i>EURAUD</i><td class="b"><i>1.75970</i><td class="b"><i>1.75981</i><td class="b"><i>0.45%</i>
<tr class="v"><td class="s"><svg width="9" height="9"><use href="#d"/></svg><i>EURJPY</i><td class="r"><i>182.335</i><td class="r"><i>182.356</i><td class="r"><i>-0.06%</i>
<tr class="v"><td class="s"><svg width="9" height="9"><use href="#d"/></svg><i>EURCHF</i><td class="r"><i>0.93433</i><td class="r"><i>0.93448</i><td class="r"><i>-0.12%</i>
<tr class="v"><td class="s"><svg width="9" height="9"><use href="#u"/></svg><i>EURNZD</i><td class="b"><i>2.01539</i><td class="b"><i>2.01554</i><td class="b"><i>0.22%</i>
<tr class="v"><td class="s"><svg width="9" height="9"><use href="#d"/></svg><i>EURCAD</i><td class="r"><i>1.61447</i><td class="r"><i>1.61461</i><td class="b"><i>0.09%</i>
<tr class="v"><td class="s"><svg width="9" height="9"><use href="#d"/></svg><i>GBPCHF</i><td class="r"><i>1.06784</i><td class="r"><i>1.06801</i><td class="r"><i>-0.21%</i>
<tr class="v"><td class="s"><svg width="9" height="9"><use href="#u"/></svg><i>GBPJPY</i><td class="r"><i>208.392</i><td class="b"><i>208.409</i><td class="r"><i>-0.16%</i>
</table></div>

<table id="t"><colgroup><col style="width:161px"><col style="width:140px"><col style="width:109px"><col style="width:93px"><col style="width:155px"><col style="width:155px"><col style="width:155px"><col style="width:155px"><col style="width:140px"><col style="width:154px"><col style="width:386px"><col style="width:100px"></colgroup>
<tr><th style="text-align:left;padding-left:7.500px">Time<svg width="8" height="5" style="margin-left:16px;vertical-align:2px"><path d="M0 5L4 0L8 5Z" fill="#222"/></svg><th>Symbol<th>Ticket<th>Type<th>Volume<th>Price<th>S / L<th>T / P<th>Time<th>Price<th>Profit<th style="border-right:0">Change
<tr><td class="l"><svg width="11" height="14"><use href="#tb"/></svg><i>2025.12.08 00:30:35</i><td><i>btcusd</i><td><i>1355282086</i><td><i>buy</i><td><i>0.3</i><td><i>89714.50</i><td class="p"><i>89991.50</i><td><i>91214.50</i><td><i>2025.12.08 00:35:03</i><td><i>89989.50</i><td class="c"><i>82.50</i><td class="c"><i>0.31 %</i>
<tr class="e"><td class="l"><svg width="11" height="14"><use href="#ts"/></svg><i>2025.12.08 11:20:34</i><td><i>btcusd</i><td><i>1355946049</i><td><i>sell</i><td><i>0.3</i><td><i>92063.50</i><td class="p"><i>91853.50</i><td><i>90563.50</i><td><i>2025.12.08 12:05:18</i><td><i>91848.00</i><td class="c"><i>64.65</i><td class="c"><i>0.23 %</i>
<tr><td class="l"><svg width="11" height="14"><use href="#tb"/></svg><i>2025.12.08 17:55:33</i><td><i>btcusd</i><td><i>1356692351</i><td><i>buy</i><td><i>0.3</i><td><i>90158.00</i><td class="p"><i>90368.00</i><td><i>91660.50</i><td><i>2025.12.08 18:24:00</i><td><i>90367.00</i><td class="c"><i>62.70</i><td class="c"><i>0.23 %</i>
<tr class="e"><td class="l"><svg width="11" height="14"><use href="#ts"/></svg><i>2025.12.08 18:35:34</i><td><i>btcusd</i><td><i>1356785257</i><td><i>sell</i><td><i>0.3</i><td><i>90159.50</i><td class="p"><i>89949.50</i><td><i>88655.50</i><td><i>2025.12.08 18:49:37</i><td><i>89945.50</i><td class="c"><i>64.20</i><td class="c"><i>0.24 %</i>
<tr><td class="l"><svg width="11" height="14"><use href="#tb"/></svg><i>2025.12.09 05:40:30</i><td><i>btcusd</i><td><i>1357481221</i><td><i>buy</i><td><i>0.3</i><td><i>90413.50</i><td class="p"><i>90623.50</i><td><i>91909.00</i><td><i>2025.12.09 14:20:34</i><td><i>90624.00</i><td class="c"><i>63.15</i><td class="c"><i>0.23 %</i>
<tr class="e"><td class="l"><svg width="11" height="14"><use href="#ts"/></svg><i>2025.12.09 19:17:59</i><td><i>btcusd</i><td><i>1358761590</i><td><i>sell</i><td><i>0.3</i><td><i>94057.00</i><td class="p"><i>93847.00</i><td><i>92549.50</i><td><i>2025.12.09 19:22:41</i><td><i>93866.00</i><td class="c"><i>57.30</i><td class="c"><i>0.20 %</i>
<tr><td class="l"><svg width="11" height="14"><use href="#tb"/></svg><i>2025.12.09 19:45:29</i><td><i>btcusd</i><td><i>1358807328</i><td><i>buy</i><td><i>0.3</i><td><i>93882.50</i><td class="p"><i>94092.50</i><td><i>95382.00</i><td><i>2025.12.09 20:20:15</i><td><i>94099.00</i><td class="c"><i>64.95</i><td class="c"><i>0.23 %</i>
<tr class="e"><td class="l"><svg width="11" height="14"><use href="#ts"/></svg><i>2025.12.09 22:26:30</i><td><i>btcusd</i><td><i>1358990203</i><td><i>sell</i><td><i>0.3</i><td><i>92788.50</i><td class="p"><i>92578.50</i><td><i>91281.00</i><td><i>2025.12.09 23:48:00</i><td><i>92554.50</i><td class="c"><i>70.20</i><td class="c"><i>0.25 %</i>
<tr><td class="l"><svg width="11" height="14"><use href="#tb"/></svg><i>2025.12.10 17:05:21</i><td><i>btcusd</i><td><i>1360136676</i><td><i>buy</i><td><i>0.3</i><td><i>92084.50</i><td class="p"><i>92294.50</i><td><i>93580.50</i><td><i>2025.12.10 18:16:49</i><td><i>92294.50</i><td class="c"><i>63.00</i><td class="c"><i>0.23 %</i>
<tr class="e"><td class="l"><svg width="11" height="14"><use href="#ts"/></svg><i>2025.12.10 22:56:20</i><td><i>btcusd</i><td><i>1360976463</i><td><i>sell</i><td><i>0.3</i><td><i>92478.00</i><td class="p"><i>92268.00</i><td><i>90980.00</i><td><i>2025.12.10 23:05:27</i><td><i>92286.50</i><td class="c"><i>57.45</i><td class="c"><i>0.21 %</i>
<tr><td class="l"><svg width="11" height="14"><use href="#tb"/></svg><i>2025.12.10 23:20:20</i><td><i>btcusd</i><td><i>1361006933</i><td><i>buy</i><td><i>0.3</i><td><i>92511.00</i><td class="p"><i>92721.00</i><td><i>94004.00</i><td><i>2025.12.10 23:53:07</i><td><i>92720.50</i><td class="c"><i>62.85</i><td class="c"><i>0.23 %</i>
<tr class="e"><td class="l"><svg width="11" height="14"><use href="#ts"/></svg><i>2025.12.11 00:20:29</i><td><i>btcusd</i><td><i>1361042757</i><td><i>sell</i><td><i>0.3</i><td><i>92204.50</i><td class="p"><i>91994.50</i><td><i>90705.50</i><td><i>2025.12.11 01:48:37</i><td><i>91995.50</i><td class="c"><i>62.70</i><td class="c"><i>0.23 %</i>
<tr><td class="l"><svg width="11" height="14"><use href="#tb"/></svg><i>2025.12.11 06:15:29</i><td><i>btcusd</i><td><i>1361391706</i><td><i>buy</i><td><i>0.3</i><td><i>90011.00</i><td class="p"><i>90261.00</i><td><i>91513.00</i><td><i>2025.12.11 07:10:32</i><td><i>90257.50</i><td class="c"><i>73.95</i><td class="c"><i>0.27 %</i>
</table>
</body></html>
